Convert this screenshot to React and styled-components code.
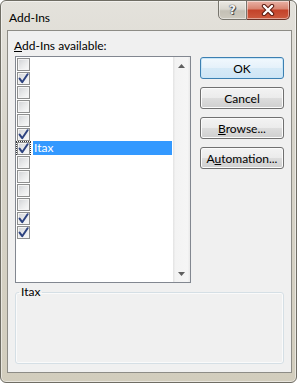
import React from 'react';
import styled, { createGlobalStyle } from 'styled-components';

const GlobalStyle = createGlobalStyle`
  html, body {
    margin: 0;
    padding: 0;
    background: #ffffff;
  }
  body {
    font-family: Lato, "Liberation Sans", sans-serif;
    font-size: 12px;
    color: #000;
  }
`;

const Window = styled.div`
  box-sizing: border-box;
  width: 297px;
  height: 383px;
  display: flex;
  flex-direction: column;
  border: 1px solid #6f6d64;
  border-radius: 6px;
  background: linear-gradient(180deg, #e4e2dc 0%, #d7d4ca 35%, #d2cdbd 100%);
  box-shadow: inset 0 0 0 1px rgba(255, 255, 255, 0.5);
  overflow: hidden;
`;

const TitleBar = styled.div`
  height: 29px;
  flex-shrink: 0;
  display: flex;
  align-items: flex-start;
  justify-content: space-between;
  padding: 0 6px 0 8px;
`;

const Title = styled.div`
  margin-top: 9px;
  font-size: 12px;
  line-height: 15px;
  color: #000;
`;

const CaptionButtons = styled.div`
  display: flex;
  margin-top: -1px;
`;

const CaptionButton = styled.div`
  box-sizing: border-box;
  height: 20px;
  width: ${p => (p.$close ? 43 : 29)}px;
  display: flex;
  align-items: center;
  justify-content: center;
  border: 1px solid ${p => (p.$close ? '#6b3328' : '#77756d')};
  border-left-width: ${p => (p.$close ? 0 : 1)}px;
  border-radius: ${p => (p.$close ? '0 0 5px 0' : '0 0 0 5px')};
  background: ${p =>
    p.$close
      ? 'linear-gradient(180deg, #e9b2a6 0%, #d98673 42%, #c4432a 52%, #cd5a3f 100%)'
      : 'linear-gradient(180deg, #ebe9e3 0%, #d9d6ce 45%, #c4c0b5 55%, #cdc9be 100%)'};
  box-shadow: inset 0 0 0 1px rgba(255, 255, 255, 0.45);
`;

const HelpGlyph = styled.span`
  font-family: "DejaVu Sans", sans-serif;
  font-weight: bold;
  font-size: 12px;
  line-height: 12px;
  color: #f4f4f4;
  text-shadow: 0 0 1px #3a3a3a, 0 0 1px #3a3a3a, 1px 1px 0 #555;
`;

const Client = styled.div`
  flex: 1;
  box-sizing: border-box;
  margin: 0 4px 9px 6px;
  display: flex;
  flex-direction: column;
  padding: 7px 7px 8px 7px;
  background: #f0f0f0;
  border: 1px solid #8d8c86;
`;

const FieldLabel = styled.div`
  margin-left: -1px;
  line-height: 15px;
  height: 15px;
  margin-bottom: 3px;

  u {
    text-decoration: underline;
  }
`;

const MainRow = styled.div`
  display: flex;
  gap: 9px;
`;

const ListBox = styled.div`
  box-sizing: border-box;
  width: 176px;
  height: 227px;
  border: 1px solid #828790;
  background: #ffffff;
  display: flex;
`;

const Rows = styled.div`
  flex: 1;
  display: flex;
  flex-direction: column;
`;

const Row = styled.div`
  height: 14px;
  display: flex;
  align-items: center;
`;

const CheckCell = styled.div`
  box-sizing: border-box;
  width: 15px;
  height: 14px;
  display: flex;
  align-items: center;
  justify-content: center;
  outline: ${p => (p.$focus ? '1px dotted #333' : 'none')};
  outline-offset: -1px;
`;

const Box = styled.div`
  box-sizing: border-box;
  width: 13px;
  height: 13px;
  border: 1px solid #8e8f8f;
  background: linear-gradient(135deg, #cfd1d4 0%, #e8e9ea 50%, #fbfbfb 100%);
  box-shadow: inset 0 0 0 1px #f4f4f4;
  position: relative;
  overflow: visible;
  display: flex;
  align-items: center;
  justify-content: center;
`;

const ItemText = styled.div`
  flex: 1;
  height: 14px;
  margin: 0 1px 0 2px;
  padding-left: 1px;
  line-height: 14px;
  background: ${p => (p.$selected ? '#3399ff' : 'transparent')};
  color: ${p => (p.$selected ? '#ffffff' : '#000000')};
`;

const ScrollBar = styled.div`
  width: 17px;
  display: flex;
  flex-direction: column;
  justify-content: space-between;
  background: linear-gradient(90deg, #e3e3e3 0%, #f3f3f3 15%, #f5f5f5 85%, #e9e9e9 100%);
`;

const ArrowBox = styled.div`
  height: 17px;
  display: flex;
  align-items: center;
  justify-content: center;
`;

const ButtonColumn = styled.div`
  flex: 1;
  display: flex;
  flex-direction: column;
  gap: 8px;
  padding-top: 1px;
`;

const Button = styled.div`
  box-sizing: border-box;
  height: 22px;
  display: flex;
  align-items: center;
  justify-content: center;
  border-radius: 3px;
  border: 1px solid ${p => (p.$default ? '#3c7fb1' : '#707070')};
  background: ${p =>
    p.$default
      ? 'linear-gradient(180deg, #f1f8fd 0%, #e5f1fa 50%, #d6eaf7 51%, #cfe5f5 100%)'
      : 'linear-gradient(180deg, #f3f3f3 0%, #ebebeb 50%, #dddddd 51%, #cfcfcf 100%)'};
  box-shadow: inset 0 0 0 1px ${p => (p.$default ? '#c8e6f8' : '#fbfbfb')};
  font-size: 12px;
  color: #000;

  u {
    text-decoration: underline;
  }
`;

const GroupBox = styled.fieldset`
  flex: 1;
  margin: 2px 0 0 0;
  padding: 0;
  border: 1px solid #d5dfe5;
  border-radius: 3px;
  box-shadow: inset 0 0 0 1px #fafafa;
  min-width: 0;
`;

const GroupLegend = styled.legend`
  margin-left: 3px;
  padding: 0 2px;
  font-size: 12px;
  line-height: 14px;
`;

const Check = () => (
  <svg width="11" height="11" viewBox="0 0 11 11">
    <path d="M1.6 5.6 L4.2 9.2 L9.6 1.2" fill="none" stroke="#2e4380" strokeWidth="2" strokeLinejoin="round" strokeLinecap="round" />
  </svg>
);

const CloseGlyph = () => (
  <svg width="14" height="12" viewBox="0 0 14 12">
    <path d="M3 2 L11 10 M11 2 L3 10" stroke="#5a1a10" strokeWidth="4.4" strokeLinecap="round" />
    <path d="M3 2 L11 10 M11 2 L3 10" stroke="#ffffff" strokeWidth="2.4" strokeLinecap="round" />
  </svg>
);

const Arrow = ({ up }) => (
  <svg width="7" height="4" viewBox="0 0 7 4">
    <path d={up ? 'M0 4 L3.5 0 L7 4 Z' : 'M0 0 L7 0 L3.5 4 Z'} fill="#5f5f5f" />
  </svg>
);

const items = [
  { checked: false },
  { checked: true },
  { checked: false },
  { checked: false },
  { checked: false },
  { checked: true },
  { checked: true, name: 'Itax', selected: true },
  { checked: false },
  { checked: false },
  { checked: false },
  { checked: false },
  { checked: true },
  { checked: true },
];

export default function App() {
  return (
    <>
      <GlobalStyle />
      <Window>
        <TitleBar>
          <Title>Add-Ins</Title>
          <CaptionButtons>
            <CaptionButton>
              <HelpGlyph>?</HelpGlyph>
            </CaptionButton>
            <CaptionButton $close>
              <CloseGlyph />
            </CaptionButton>
          </CaptionButtons>
        </TitleBar>
        <Client>
          <FieldLabel>
            <u>A</u>dd-Ins available:
          </FieldLabel>
          <MainRow>
            <ListBox>
              <Rows>
                {items.map((item, i) => (
                  <Row key={i}>
                    <CheckCell $focus={item.selected}>
                      <Box>{item.checked && <Check />}</Box>
                    </CheckCell>
                    <ItemText $selected={item.selected}>{item.name}</ItemText>
                  </Row>
                ))}
              </Rows>
              <ScrollBar>
                <ArrowBox>
                  <Arrow up />
                </ArrowBox>
                <ArrowBox>
                  <Arrow />
                </ArrowBox>
              </ScrollBar>
            </ListBox>
            <ButtonColumn>
              <Button $default>OK</Button>
              <Button>Cancel</Button>
              <Button>
                <span><u>B</u>rowse...</span>
              </Button>
              <Button>
                <span>A<u>u</u>tomation...</span>
              </Button>
            </ButtonColumn>
          </MainRow>
          <GroupBox>
            <GroupLegend>Itax</GroupLegend>
          </GroupBox>
        </Client>
      </Window>
    </>
  );
}
